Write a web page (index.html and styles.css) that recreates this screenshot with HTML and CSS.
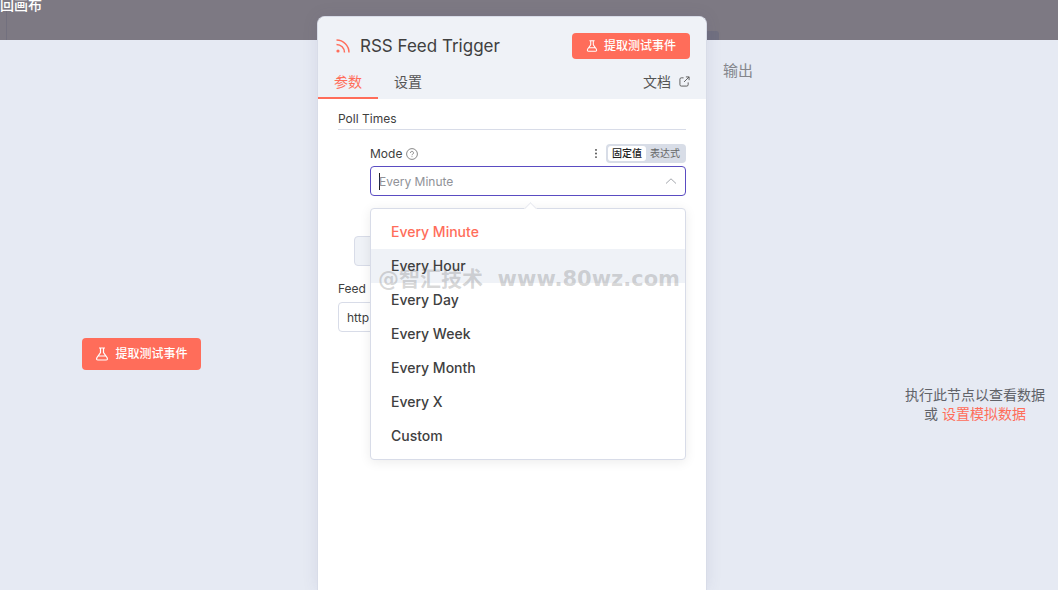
FILE: index.html
```html
<!DOCTYPE html>
<html lang="zh-CN">
<head>
<meta charset="UTF-8">
<meta name="viewport" content="width=device-width, initial-scale=1.0">
<title>RSS Feed Trigger</title>
<link rel="stylesheet" href="styles.css">
</head>
<body>
<header class="topbar">
    <a class="back" href="#">回画布</a>
    <div class="topbar-line"></div>
</header>
<main class="layout">
    <section class="input-panel">
        <button class="btn btn-large" type="button">
            <svg class="flask" viewBox="0 0 14 14"><path d="M4 1h6M5.500 1v4.500L2 10.500Q.8 13 3 13h8q2.200 0 1-2.500L8.500 5.500V1M3.500 9h7"/></svg>
            提取测试事件
        </button>
    </section>

    <section class="modal">
        <div class="modal-header">
            <div class="title-row">
                <svg class="rss" viewBox="0 0 14 14"><path d="M.5 1A12.5 12.5 0 0 1 13 13.5M.5 5.5a8 8 0 0 1 8 8"/><circle cx="2" cy="12" r="1.6"/></svg>
                <h1>RSS Feed Trigger</h1>
                <button class="btn" type="button">
                    <svg class="flask" viewBox="0 0 14 14"><path d="M4 1h6M5.500 1v4.500L2 10.500Q.8 13 3 13h8q2.200 0 1-2.500L8.500 5.500V1M3.500 9h7"/></svg>
                    提取测试事件
                </button>
            </div>
            <nav class="tabs">
                <button class="tab active" type="button">参数</button>
                <button class="tab" type="button">设置</button>
                <a class="docs" href="#">文档
                    <svg viewBox="0 0 12 12"><path d="M5 2H2.5Q1 2 1 3.500V9.500Q1 11 2.500 11h6Q10 11 10 9.500V7M7.500 1H11v3.500M11 1 5.500 6.500"/></svg>
                </a>
            </nav>
        </div>

        <div class="modal-body">
            <h2>Poll Times</h2>
            <div class="poll-item">
                <div class="label-row">
                    <label for="mode">Mode</label>
                    <svg class="help" viewBox="0 0 12 12"><circle cx="6" cy="6" r="5.400"/><path d="M4.500 4.900a1.500 1.500 0 1 1 2.300 1.200Q6 6.500 6 7.200M6 8.300v.8"/></svg>
                    <button class="dots" type="button" aria-label="更多">
                        <svg viewBox="0 0 4 10"><circle cx="2" cy="1" r="1"/><circle cx="2" cy="5" r="1"/><circle cx="2" cy="9" r="1"/></svg>
                    </button>
                    <div class="toggle">
                        <label><input type="radio" name="kind" checked><span>固定值</span></label>
                        <label><input type="radio" name="kind"><span>表达式</span></label>
                    </div>
                </div>
                <div class="select">
                    <input id="mode" class="select-input" type="text" role="combobox" aria-expanded="true" aria-controls="mode-list" placeholder="Every Minute">
                    <svg class="chevron" viewBox="0 0 12 6"><path d="M1 5.500 6 .8l5 4.700"/></svg>
                    <div class="dropdown">
                        <ul id="mode-list" role="listbox" aria-label="Mode">
                            <li class="selected" role="option" aria-selected="true">Every Minute</li>
                            <li class="hover" role="option">Every Hour</li>
                            <li role="option">Every Day</li>
                            <li role="option">Every Week</li>
                            <li role="option">Every Month</li>
                            <li role="option">Every X</li>
                            <li role="option">Custom</li>
                        </ul>
                        <div class="watermark"><span>@智汇技术</span><span>www.80wz.com</span></div>
                    </div>
                </div>
            </div>
            <button class="add" type="button" aria-label="Poll Times"></button>
            <label class="feed-label" for="feed">Feed</label>
            <input id="feed" class="feed-input" type="text" value="http">
        </div>
    </section>

    <section class="output-panel">
        <h2 class="output-title">输出</h2>
        <div class="output-empty">
            <p>执行此节点以查看数据<br>或 <a href="#">设置模拟数据</a></p>
        </div>
    </section>
</main>
</body>
</html>
```
FILE: styles.css
```css
* {
    box-sizing: border-box;
}
body {
    margin: 0;
    min-height: 100vh;
    display: flex;
    flex-direction: column;
    background-color: #e6eaf3;
    color: #404040;
    font-family: Inter, "Noto Sans CJK SC", sans-serif;
    font-size: 14px;
    overflow: hidden;
}
button, input {
    font: inherit;
    color: inherit;
}
button {
    border: 0;
    background: none;
    padding: 0;
    cursor: pointer;
}
a {
    color: #ff6d5a;
    text-decoration: none;
}
svg {
    fill: none;
    stroke: currentColor;
    flex-shrink: 0;
}
h1, h2, p, ul {
    margin: 0;
    padding: 0;
    font-weight: 400;
}

/* canvas behind the dialog */
.topbar {
    height: 40px;
    background-color: #7d7983;
}
.back {
    display: block;
    color: #fff;
    font-weight: 500;
    line-height: 10px;
}
.topbar-line {
    width: 7px;
    height: 30px;
    border-right: 1px solid #72707e;
}
.layout {
    flex: 1;
    display: grid;
    grid-template-columns: 317fr 390fr 351fr;
}

.btn {
    display: flex;
    align-items: center;
    justify-content: center;
    gap: 6px;
    height: 26px;
    padding: 0 14px;
    border-radius: 4px;
    background-color: #ff6d5a;
    color: #fff;
    font-size: 12px;
    font-weight: 500;
    line-height: 16px;
    white-space: nowrap;
}
.btn-large {
    height: 32px;
    padding: 0 13px;
}
.flask {
    width: 12px;
    height: 12px;
    stroke-width: 1.2;
}
.btn-large .flask {
    width: 14px;
    height: 14px;
}

.input-panel {
    display: flex;
    align-items: center;
    justify-content: center;
    padding: 78px 34px 0 0;
}

.modal {
    position: relative;
    margin-top: -24px;
    border: 1px solid #d8dce8;
    border-bottom: 0;
    border-radius: 8px 8px 0 0;
    background-color: #fff;
    box-shadow: 0 0 16px rgba(68, 68, 120, 0.1);
}
.modal-header {
    border-radius: 8px 8px 0 0;
    background-color: #eff2f7;
}
.title-row {
    display: flex;
    align-items: center;
    padding: 16px 16px 6px 18px;
}
.title-row h1 {
    flex: 1;
    font-size: 17px;
    line-height: 24px;
}
.rss {
    width: 14px;
    height: 14px;
    margin-right: 10px;
    color: #ff6d5a;
    stroke-width: 1.5;
}
.rss circle {
    fill: currentColor;
    stroke: none;
}
.tabs {
    display: flex;
    height: 34px;
    color: #555;
}
.tab {
    padding: 0 16px;
    border-bottom: 2px solid transparent;
}
.tab.active {
    border-color: #ff6d5a;
    color: #ff6d5a;
}
.docs {
    display: flex;
    align-items: center;
    gap: 8px;
    margin-left: auto;
    padding: 0 16px 2px 0;
    color: #555;
}
.docs svg {
    width: 11px;
    height: 11px;
}

.modal-body {
    padding: 10px 20px;
    font-size: 12px;
}
.modal-body h2 {
    height: 21px;
    border-bottom: 1px solid #d8dce8;
    font-size: 12px;
    line-height: 20px;
}
.poll-item {
    padding: 14px 0 0 32px;
}
.label-row {
    display: flex;
    align-items: center;
    height: 19px;
    margin-bottom: 3px;
}
.help {
    width: 12px;
    height: 12px;
    margin-left: 4px;
    color: #888;
}
.dots {
    display: flex;
    margin: 0 8px 0 auto;
}
.dots svg {
    width: 4px;
    height: 9px;
    fill: #444;
    stroke: none;
}
.toggle {
    display: flex;
    padding: 2px;
    border-radius: 4px;
    background-color: #d8dde7;
    color: #666;
    font-size: 10px;
}
.toggle input {
    position: absolute;
    opacity: 0;
}
.toggle span {
    display: block;
    padding: 0 4px;
    border-radius: 3px;
    line-height: 15px;
}
.toggle input:checked + span {
    background-color: #fff;
    color: #222;
    font-weight: 500;
}

.select {
    position: relative;
}
.select-input {
    display: block;
    width: 100%;
    height: 30px;
    padding: 0 32px 0 8px;
    border: 1px solid #5a4cc2;
    border-radius: 4px;
    outline: 0;
    background: linear-gradient(#222, #222) 8px center / 1px 17px no-repeat #fff;
}
.select-input::placeholder {
    color: #909298;
    opacity: 1;
}
.chevron {
    position: absolute;
    top: 12px;
    right: 9px;
    width: 12px;
    height: 6px;
    color: #a4a7ad;
}
.dropdown {
    position: absolute;
    z-index: 1;
    top: 42px;
    left: 0;
    right: 0;
    padding: 6px 0;
    border: 1px solid #d8dce8;
    border-radius: 4px;
    background-color: #fff;
    box-shadow: 0 2px 12px rgba(0, 0, 0, 0.08);
}
.dropdown::before {
    content: "";
    position: absolute;
    top: -5px;
    left: 50%;
    width: 8px;
    height: 8px;
    margin-left: -2px;
    border: 1px solid #e8eaf0;
    border-right: 0;
    border-bottom: 0;
    background-color: #fff;
    transform: rotate(45deg);
}
.dropdown ul {
    list-style: none;
    font-size: 14px;
    line-height: 34px;
}
.dropdown li {
    padding: 0 20px;
    font-weight: 500;
}
.dropdown .selected {
    color: #ff6d5a;
}
.dropdown .hover {
    background-color: #eff2f7;
}
.watermark {
    position: absolute;
    top: 55px;
    left: 7px;
    right: 5px;
    display: flex;
    justify-content: space-between;
    color: rgba(100, 100, 100, 0.26);
    font-family: "DejaVu Sans", "Noto Sans CJK SC", sans-serif;
    font-size: 21px;
    font-weight: 700;
    line-height: 30px;
    white-space: nowrap;
    pointer-events: none;
}

.add {
    display: block;
    width: calc(100% - 16px);
    height: 30px;
    margin: 40px 0 0 16px;
    border: 1px solid #d8dce8;
    border-radius: 4px;
    background-color: #eff2f7;
}
.feed-label {
    display: block;
    margin: 13px 0 3px;
    line-height: 20px;
}
.feed-input {
    width: 100%;
    height: 30px;
    padding: 0 8px;
    border: 1px solid #d8dce8;
    border-radius: 4px;
}

.output-panel {
    display: flex;
    flex-direction: column;
    color: #606268;
}
.output-panel::before {
    content: "";
    width: 12px;
    height: 9px;
    margin-top: -9px;
    border-radius: 0 3px 0 0;
    background-color: #717080;
}
.output-title {
    padding: 21px 16px 0;
    color: #84868c;
    font-size: 15px;
    line-height: 20px;
}
.output-empty {
    flex: 1;
    display: flex;
    align-items: center;
    justify-content: flex-end;
    padding: 136px 13px 0 0;
    line-height: 19px;
    text-align: center;
}
```
